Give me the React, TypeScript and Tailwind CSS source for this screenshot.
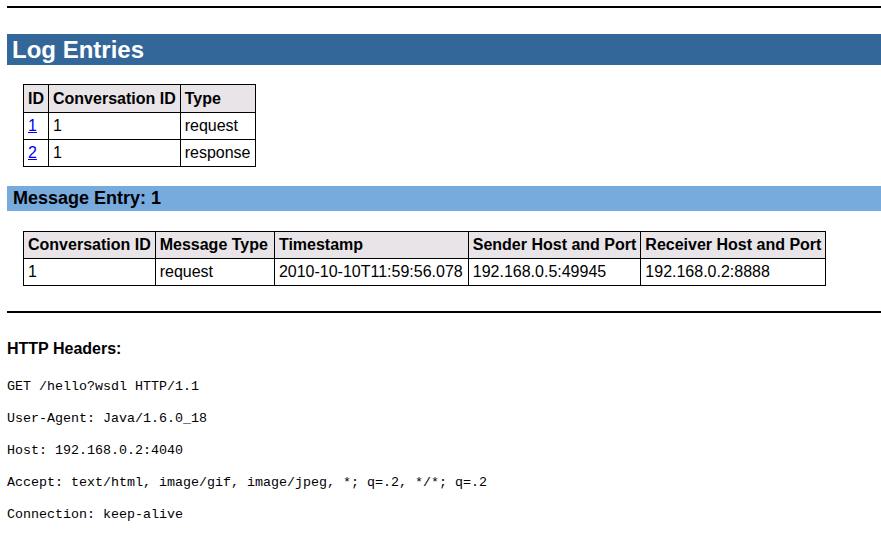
import React from 'react';

const logRows = [
  { id: '1', conv: '1', type: 'request' },
  { id: '2', conv: '1', type: 'response' },
];

const headers = [
  'GET /hello?wsdl HTTP/1.1',
  'User-Agent: Java/1.6.0_18',
  'Host: 192.168.0.2:4040',
  'Accept: text/html, image/gif, image/jpeg, *; q=.2, */*; q=.2',
  'Connection: keep-alive',
];

const th = 'border border-black py-0 text-left font-bold leading-[18px]';
const td = 'border border-black py-0 text-left font-normal leading-[18px]';

export default function App() {
  return (
    <div className="min-h-screen bg-white pl-[7px] pt-[6px] text-black text-[16px] font-['Liberation_Sans',Arial,sans-serif]">
      {/* top rule */}
      <div className="h-[2px] bg-black" />

      {/* Log Entries */}
      <h1 className="mt-[26px] h-[31px] bg-[#336699] pl-[5px] text-[24px] font-bold leading-[31px] text-white">
        Log Entries
      </h1>

      <table className="ml-[16px] mt-[19px] border-collapse">
        <thead>
          <tr className="h-[28px] bg-[#e8e4e8]">
            <th className={`${th} px-[4px]`}>ID</th>
            <th className={`${th} px-[4px]`}>Conversation ID</th>
            <th className={`${th} px-[4px]`}>Type</th>
          </tr>
        </thead>
        <tbody>
          {logRows.map((r) => (
            <tr key={r.id} className="h-[27px]">
              <td className={`${td} px-[4px]`}>
                <a href="#" className="text-[#0000ee] underline">{r.id}</a>
              </td>
              <td className={`${td} px-[4px]`}>{r.conv}</td>
              <td className={`${td} px-[4px]`}>{r.type}</td>
            </tr>
          ))}
        </tbody>
      </table>

      {/* Message Entry */}
      <h2 className="mt-[19px] h-[25px] bg-[#77aadd] pl-[6px] text-[18px] font-bold leading-[25px]">
        Message Entry: 1
      </h2>

      <table className="ml-[16px] mt-[20px] border-collapse">
        <thead>
          <tr className="h-[27px] bg-[#e8e4e8]">
            <th className={`${th} px-[4px]`}>Conversation ID</th>
            <th className={`${th} pl-[4px] pr-[6px]`}>Message Type</th>
            <th className={`${th} px-[4px]`}>Timestamp</th>
            <th className={`${th} px-[4px]`}>Sender Host and Port</th>
            <th className={`${th} px-[4px]`}>Receiver Host and Port</th>
          </tr>
        </thead>
        <tbody>
          <tr className="h-[27px]">
            <td className={`${td} px-[4px]`}>1</td>
            <td className={`${td} pl-[4px] pr-[6px]`}>request</td>
            <td className={`${td} pl-[4px] pr-[5px]`}>2010-10-10T11:59:56.078</td>
            <td className={`${td} px-[4px]`}>192.168.0.5:49945</td>
            <td className={`${td} px-[4px]`}>192.168.0.2:8888</td>
          </tr>
        </tbody>
      </table>

      <div className="mt-[25px] h-[2px] bg-black" />

      {/* HTTP Headers */}
      <h3 className="mt-[27px] text-[16px] font-bold leading-[18px]">HTTP Headers:</h3>
      <div className="mt-[13px] font-['Liberation_Mono','Courier_New',monospace] text-[13.33px]">
        {headers.map((h) => (
          <div key={h} className="h-[32px] leading-[32px] whitespace-pre">
            {h}
          </div>
        ))}
      </div>
    </div>
  );
}
